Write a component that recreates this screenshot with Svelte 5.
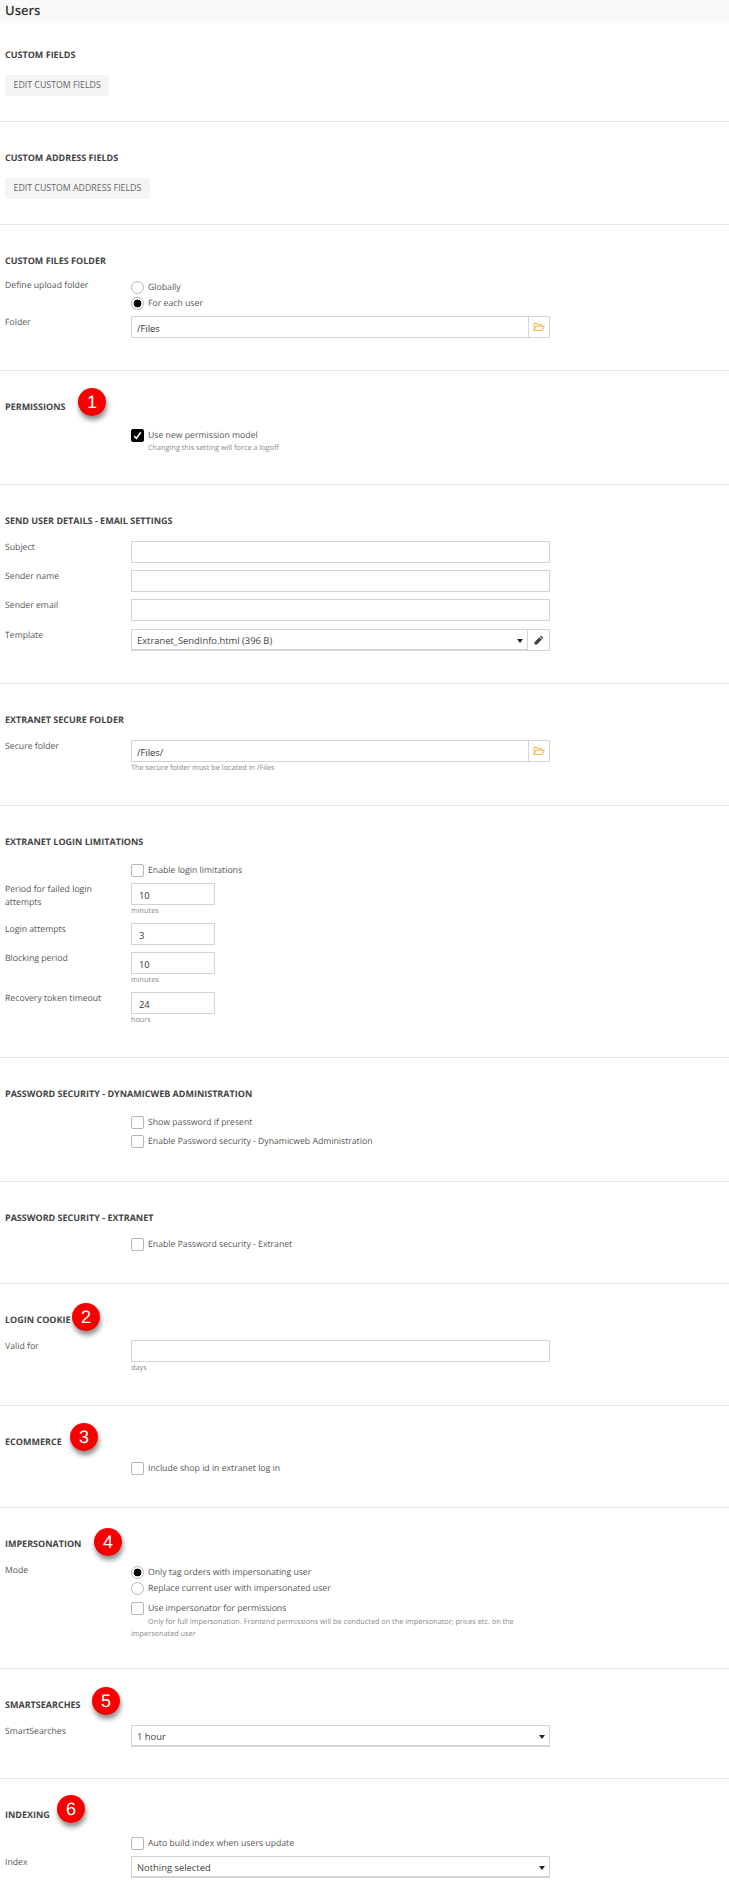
<script>
  const textRows = ['Subject', 'Sender name', 'Sender email']
  const limits = [
    { label: 'Period for failed login attempts', value: '10', unit: 'minutes' },
    { label: 'Login attempts', value: '3' },
    { label: 'Blocking period', value: '10', unit: 'minutes' },
    { label: 'Recovery token timeout', value: '24', unit: 'hours' }
  ]
</script>

{#snippet folder()}
  <span class="addon">
    <svg width="12" height="10" viewBox="0 0 12 10" fill="none" stroke="#f7b64f" stroke-width="1.1" stroke-linejoin="round">
      <path d="M1 8.5V1.5h3l1 1.2h3.6v1.6"/>
      <path d="M1 8.5h8.2l2-4.2H3z"/>
    </svg>
  </span>
{/snippet}

{#snippet caret()}
  <span class="caret"></span>
{/snippet}

<div class="page">
  <header class="top">Users</header>

  <section class="first">
    <h2>Custom fields</h2>
    <button class="btn" type="button">EDIT CUSTOM FIELDS</button>
  </section>

  <section>
    <h2>Custom address fields</h2>
    <button class="btn" type="button">EDIT CUSTOM ADDRESS FIELDS</button>
  </section>

  <section>
    <h2>Custom files folder</h2>
    <div class="row tight">
      <span class="label">Define upload folder</span>
      <div>
        <label class="opt"><input type="radio" name="upload" /><span>Globally</span></label>
        <label class="opt"><input type="radio" name="upload" checked /><span>For each user</span></label>
      </div>
    </div>
    <div class="row">
      <span class="label">Folder</span>
      <div class="group">
        <input class="text" type="text" value="/Files" />
        {@render folder()}
      </div>
    </div>
  </section>

  <section class="pull">
    <h2>Permissions<i class="badge b1">1</i></h2>
    <div class="row">
      <span></span>
      <div>
        <label class="opt"><input type="checkbox" checked /><span>Use new permission model</span></label>
        <p class="hint indent">Changing this setting will force a logoff</p>
      </div>
    </div>
  </section>

  <section>
    <h2>Send user details - email settings</h2>
    {#each textRows as label}
      <div class="row">
        <span class="label">{label}</span>
        <input class="text" type="text" />
      </div>
    {/each}
    <div class="row lower">
      <span class="label">Template</span>
      <div class="group">
        <div class="select">Extranet_SendInfo.html (396 B){@render caret()}</div>
        <span class="addon">
          <svg width="10" height="10" viewBox="0 0 10 10" fill="#444">
            <path d="M7 .6l2.4 2.4-1 1L6 1.6zM5.4 2.2l2.4 2.4L3 9.4.4 9.6.6 7z"/>
          </svg>
        </span>
      </div>
    </div>
  </section>

  <section>
    <h2>Extranet secure folder</h2>
    <div class="row">
      <span class="label">Secure folder</span>
      <div>
        <div class="group">
          <input class="text" type="text" value="/Files/" />
          {@render folder()}
        </div>
        <p class="hint">The secure folder must be located in /Files</p>
      </div>
    </div>
  </section>

  <section>
    <h2>Extranet login limitations</h2>
    <div class="row short">
      <span></span>
      <label class="opt"><input type="checkbox" /><span>Enable login limitations</span></label>
    </div>
    {#each limits as item}
      <div class="row">
        <span class="label">{item.label}</span>
        <div>
          <input class="text small" type="text" value={item.value} />
          {#if item.unit}<p class="hint">{item.unit}</p>{/if}
        </div>
      </div>
    {/each}
  </section>

  <section>
    <h2>Password security - Dynamicweb administration</h2>
    <div class="row close">
      <span></span>
      <label class="opt"><input type="checkbox" /><span>Show password if present</span></label>
    </div>
    <div class="row">
      <span></span>
      <label class="opt"><input type="checkbox" /><span>Enable Password security - Dynamicweb Administration</span></label>
    </div>
  </section>

  <section class="snug pull">
    <h2>Password security - Extranet</h2>
    <div class="row">
      <span></span>
      <label class="opt"><input type="checkbox" /><span>Enable Password security - Extranet</span></label>
    </div>
  </section>

  <section>
    <h2>Login cookie<i class="badge b2">2</i></h2>
    <div class="row">
      <span class="label">Valid for</span>
      <div>
        <input class="text" type="text" />
        <p class="hint">days</p>
      </div>
    </div>
  </section>

  <section class="snug pull">
    <h2>Ecommerce<i class="badge b3">3</i></h2>
    <div class="row">
      <span></span>
      <label class="opt"><input type="checkbox" /><span>Include shop id in extranet log in</span></label>
    </div>
  </section>

  <section class="imp">
    <h2>Impersonation<i class="badge b4">4</i></h2>
    <div class="row">
      <span class="label">Mode</span>
      <div>
        <label class="opt"><input type="radio" name="mode" checked /><span>Only tag orders with impersonating user</span></label>
        <label class="opt"><input type="radio" name="mode" /><span>Replace current user with impersonated user</span></label>
        <label class="opt gap"><input type="checkbox" /><span>Use impersonator for permissions</span></label>
        <p class="hint wrap">Only for full Impersonation. Frontend permissions will be conducted on the impersonator; prices etc. on the impersonated user</p>
      </div>
    </div>
  </section>

  <section class="pull">
    <h2>SmartSearches<i class="badge b5">5</i></h2>
    <div class="row">
      <span class="label">SmartSearches</span>
      <div class="group"><div class="select">1 hour{@render caret()}</div></div>
    </div>
  </section>

  <section class="last">
    <h2>Indexing<i class="badge b6">6</i></h2>
    <div class="row short">
      <span></span>
      <label class="opt"><input type="checkbox" /><span>Auto build index when users update</span></label>
    </div>
    <div class="row">
      <span class="label">Index</span>
      <div class="group"><div class="select">Nothing selected{@render caret()}</div></div>
    </div>
  </section>
</div>

<style>
  :global(body) {
    margin: 0;
    background: #fff;
  }

  .page {
    width: 729px;
    height: 1896px;
    overflow: hidden;
    font-family: "Open Sans", sans-serif;
    font-size: 8.7px;
    line-height: 13px;
    color: #555;
    text-rendering: geometricPrecision;
  }

  .top {
    height: 23px;
    padding-left: 5px;
    background: #f9f9f9;
    color: #333;
    font-size: 13px;
    font-weight: 600;
    line-height: 21px;
  }

  section {
    padding: 29px 5px 25px;
    border-bottom: 1px solid #e8e8e8;
  }

  section.first {
    padding-top: 25px;
  }

  section.pull {
    padding-bottom: 24px;
  }

  section.imp {
    padding-bottom: 21px;
  }

  section.last {
    border-bottom: 0;
  }

  h2 {
    position: relative;
    margin: 0 0 13px;
    font-size: 9px;
    font-weight: 700;
    line-height: 14px;
    text-transform: uppercase;
    color: #444;
  }

  section.snug h2 {
    margin-bottom: 11px;
  }

  .badge {
    position: absolute;
    width: 28px;
    height: 28px;
    border-radius: 50%;
    background: radial-gradient(circle at 50% 45%, #f80000 55%, #d80000 100%);
    box-shadow: 1px 4px 5px rgba(0, 0, 0, 0.45);
    color: #fff;
    font-family: "Liberation Sans", sans-serif;
    font-size: 18px;
    font-style: normal;
    font-weight: 400;
    line-height: 28px;
    text-align: center;
  }

  .b1 { left: 73px; top: -12px; }
  .b2 { left: 67px; top: -10px; }
  .b3 { left: 65px; top: -12px; }
  .b4 { left: 89px; top: -9px; }
  .b5 { left: 87px; top: -11px; }
  .b6 { left: 52px; top: -13px; }

  .btn {
    display: block;
    height: 21px;
    padding: 0 8.5px;
    border: 0;
    border-radius: 2px;
    background: #f4f4f4;
    color: #666;
    font: inherit;
    font-size: 8.8px;
  }

  .row {
    display: grid;
    grid-template-columns: 126px 419px;
    margin-bottom: 7px;
  }

  .row.tight {
    margin-top: -2px;
    margin-bottom: 5px;
  }

  .row.short {
    margin-bottom: 5px;
  }

  .row.close {
    margin-bottom: 3px;
  }

  .row.lower {
    margin-top: 8px;
  }

  .label {
    padding-right: 14px;
  }

  .opt {
    display: flex;
    align-items: center;
    gap: 4px;
    height: 16px;
    white-space: nowrap;
  }

  .opt.gap {
    margin-top: 4px;
  }

  input[type='radio'],
  input[type='checkbox'] {
    appearance: none;
    flex: none;
    width: 13px;
    height: 13px;
    margin: 0;
    border: 1px solid #b5b5b5;
    background: #fff;
  }

  input[type='radio'] {
    border-radius: 50%;
  }

  input[type='radio']:checked {
    background: radial-gradient(circle, #000 0 3.6px, #fff 4.2px);
  }

  input[type='checkbox'] {
    border-radius: 2px;
  }

  input[type='checkbox']:checked {
    border-color: #000;
    background: #000 url("data:image/svg+xml,%3Csvg xmlns='http://www.w3.org/2000/svg' viewBox='0 0 13 13'%3E%3Cpath d='M2.6 7l2.6 3L10.4 2.6' fill='none' stroke='%23fff' stroke-width='1.8'/%3E%3C/svg%3E");
  }

  .text {
    display: block;
    box-sizing: border-box;
    width: 419px;
    height: 22px;
    margin: 0;
    padding: 2px 5px 0;
    border: 1px solid #d4d4d4;
    outline: 0;
    background: #fff;
    color: #333;
    font: inherit;
    font-size: 9.4px;
  }

  .text.small {
    width: 84px;
    padding-left: 7px;
  }

  .group {
    display: flex;
    height: 22px;
  }

  .group .text {
    flex: 1;
    width: auto;
    min-width: 0;
    border-right: 0;
  }

  .select {
    position: relative;
    flex: 1;
    box-sizing: border-box;
    padding: 0 5px;
    border: 1px solid #d4d4d4;
    border-bottom-width: 2px;
    color: #444;
    font-size: 9.4px;
    line-height: 21px;
  }

  .caret {
    position: absolute;
    right: 4px;
    top: 9px;
    border: 3px solid transparent;
    border-top: 4px solid #222;
    border-bottom: 0;
  }

  .addon {
    display: flex;
    flex: none;
    align-items: center;
    justify-content: center;
    box-sizing: border-box;
    width: 22px;
    border: 1px solid #d4d4d4;
  }

  .select + .addon {
    border-left: 0;
  }

  .hint {
    margin: 1px 0 0;
    color: #888;
    font-size: 7.3px;
    line-height: 10px;
  }

  .hint.indent {
    margin: 0 0 0 17px;
  }

  .hint.wrap {
    margin-top: 0;
    text-indent: 17px;
    line-height: 12px;
  }
</style>
